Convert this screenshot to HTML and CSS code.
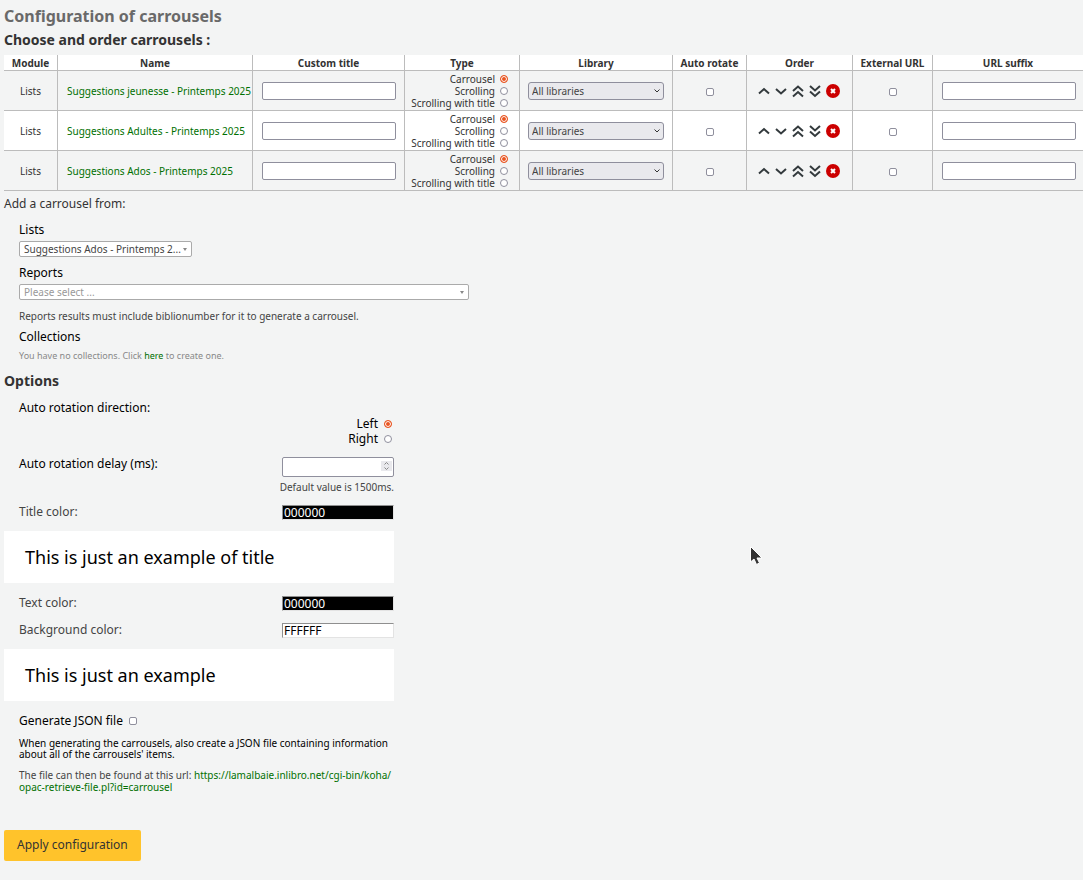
FILE: index.html
```
<!DOCTYPE html>
<html lang="en">
<head>
<meta charset="utf-8">
<title>Configuration of carrousels</title>
<link rel="stylesheet" href="styles.css">
</head>
<body>
<svg class="defs" aria-hidden="true">
  <symbol id="up" viewBox="0 0 14 14"><path d="M2 9.5 7 5l5 4.5"/></symbol>
  <symbol id="down" viewBox="0 0 14 14"><path d="M2 5l5 4.5L12 5"/></symbol>
  <symbol id="top" viewBox="0 0 14 14"><path d="M2 7l5-4.5L12 7M2 12.5 7 8l5 4.5"/></symbol>
  <symbol id="bottom" viewBox="0 0 14 14"><path d="M2 2l5 4.500L12 2M2 7.500l5 4.500 5-4.500"/></symbol>
  <symbol id="remove" viewBox="0 0 14 14"><circle cx="7" cy="7" r="7"/><path d="M5 5l4 4M9 5 5 9"/></symbol>
</svg>
<main>
  <h1>Configuration of carrousels</h1>
  <form>
  <h2>Choose and order carrousels :</h2>
  <table class="carrousels">
    <colgroup><col class="c-module"><col class="c-name"><col class="c-title"><col class="c-type"><col class="c-library"><col class="c-auto"><col class="c-order"><col class="c-external"><col class="c-suffix"></colgroup>
    <thead>
      <tr><th>Module</th><th>Name</th><th>Custom title</th><th>Type</th><th>Library</th><th>Auto rotate</th><th>Order</th><th>External URL</th><th>URL suffix</th></tr>
    </thead>
    <tbody>
      <tr>
        <td class="center">Lists</td>
        <td class="name"><a href="#">Suggestions jeunesse - Printemps 2025</a></td>
        <td><input class="text" type="text" aria-label="Custom title"></td>
        <td><div class="types"><label>Carrousel<input type="radio" name="type1" checked></label><label>Scrolling<input type="radio" name="type1"></label><label>Scrolling with title<input type="radio" name="type1"></label></div></td>
        <td class="lib"><select class="library" aria-label="Library"><option>All libraries</option></select></td>
        <td class="center"><input type="checkbox" aria-label="Auto rotate"></td>
        <td><div class="order"><button type="button" aria-label="Move up"><svg><use href="#up"/></svg></button><button type="button" aria-label="Move down"><svg><use href="#down"/></svg></button><button type="button" aria-label="Move to top"><svg><use href="#top"/></svg></button><button type="button" aria-label="Move to bottom"><svg><use href="#bottom"/></svg></button><button type="button" class="remove" aria-label="Remove"><svg><use href="#remove"/></svg></button></div></td>
        <td class="center"><input type="checkbox" aria-label="External URL"></td>
        <td><input class="text" type="text" aria-label="URL suffix"></td>
      </tr>
      <tr>
        <td class="center">Lists</td>
        <td class="name"><a href="#">Suggestions Adultes - Printemps 2025</a></td>
        <td><input class="text" type="text" aria-label="Custom title"></td>
        <td><div class="types"><label>Carrousel<input type="radio" name="type2" checked></label><label>Scrolling<input type="radio" name="type2"></label><label>Scrolling with title<input type="radio" name="type2"></label></div></td>
        <td class="lib"><select class="library" aria-label="Library"><option>All libraries</option></select></td>
        <td class="center"><input type="checkbox" aria-label="Auto rotate"></td>
        <td><div class="order"><button type="button" aria-label="Move up"><svg><use href="#up"/></svg></button><button type="button" aria-label="Move down"><svg><use href="#down"/></svg></button><button type="button" aria-label="Move to top"><svg><use href="#top"/></svg></button><button type="button" aria-label="Move to bottom"><svg><use href="#bottom"/></svg></button><button type="button" class="remove" aria-label="Remove"><svg><use href="#remove"/></svg></button></div></td>
        <td class="center"><input type="checkbox" aria-label="External URL"></td>
        <td><input class="text" type="text" aria-label="URL suffix"></td>
      </tr>
      <tr>
        <td class="center">Lists</td>
        <td class="name"><a href="#">Suggestions Ados - Printemps 2025</a></td>
        <td><input class="text" type="text" aria-label="Custom title"></td>
        <td><div class="types"><label>Carrousel<input type="radio" name="type3" checked></label><label>Scrolling<input type="radio" name="type3"></label><label>Scrolling with title<input type="radio" name="type3"></label></div></td>
        <td class="lib"><select class="library" aria-label="Library"><option>All libraries</option></select></td>
        <td class="center"><input type="checkbox" aria-label="Auto rotate"></td>
        <td><div class="order"><button type="button" aria-label="Move up"><svg><use href="#up"/></svg></button><button type="button" aria-label="Move down"><svg><use href="#down"/></svg></button><button type="button" aria-label="Move to top"><svg><use href="#top"/></svg></button><button type="button" aria-label="Move to bottom"><svg><use href="#bottom"/></svg></button><button type="button" class="remove" aria-label="Remove"><svg><use href="#remove"/></svg></button></div></td>
        <td class="center"><input type="checkbox" aria-label="External URL"></td>
        <td><input class="text" type="text" aria-label="URL suffix"></td>
      </tr>
    </tbody>
  </table>

  <p class="lead">Add a carrousel from:</p>
  <section class="sources">
    <label for="lists">Lists</label>
    <select id="lists" class="picker picker-short"><option>Suggestions Ados - Printemps 2...</option></select>
    <label for="reports">Reports</label>
    <select id="reports" class="picker empty"><option>Please select ...</option></select>
    <p class="hint">Reports results must include biblionumber for it to generate a carrousel.</p>
    <h3>Collections</h3>
    <p class="muted">You have no collections. Click <a href="#">here</a> to create one.</p>
  </section>

  <h2>Options</h2>
  <section class="options">
    <fieldset>
      <legend>Auto rotation direction:</legend>
      <label>Left<input type="radio" name="direction" checked></label>
      <label>Right<input type="radio" name="direction"></label>
    </fieldset>
    <div class="row delay">
      <label for="delay">Auto rotation delay (ms):</label>
      <div class="field">
        <div class="number"><input id="delay" class="text" type="number"><svg viewBox="0 0 11 10" aria-hidden="true"><path class="pad" d="M0 0h11v10H0z"/><path d="M3.500 3.500l2-2 2 2M3.500 6.500l2 2 2-2"/></svg></div>
        <p class="hint">Default value is 1500ms.</p>
      </div>
    </div>
    <div class="row color">
      <label for="title-color">Title color:</label>
      <input id="title-color" class="swatch dark" type="text" value="000000">
    </div>
    <div class="preview">This is just an example of title</div>
    <div class="row color">
      <label for="text-color">Text color:</label>
      <input id="text-color" class="swatch dark" type="text" value="000000">
    </div>
    <div class="row color">
      <label for="background-color">Background color:</label>
      <input id="background-color" class="swatch" type="text" value="FFFFFF">
    </div>
    <div class="preview">This is just an example</div>
    <div class="json">
      <label>Generate JSON file<input type="checkbox"></label>
      <p class="about">When generating the carrousels, also create a JSON file containing information about all of the carrousels' items.</p>
      <p class="location">The file can then be found at this url: <a href="#">https://lamalbaie.inlibro.net/cgi-bin/koha/<wbr>opac-retrieve-file.pl?id=carrousel</a></p>
    </div>
  </section>
  <button class="apply" type="submit">Apply configuration</button>
  </form>
</main>
<svg class="pointer" viewBox="0 0 14 22" aria-hidden="true"><path d="M1.500 1.500v15.500l3.500-3 2.500 5.500 3-1.500-2.500-5h5z"/></svg>
</body>
</html>
```

FILE: styles.css
```
* { box-sizing: border-box; }
body {
  margin: 0;
  padding: 6px 0 18px 4px;
  background: #f3f4f4;
  color: #333;
  font: 12px/16px "Noto Sans", sans-serif;
  overflow-x: hidden;
}
h1, h2, h3, p { margin: 0; }
h1 { margin-bottom: 4px; color: #696969; font-size: 16px; line-height: 20px; }
h2 { font-size: 14px; line-height: 20px; }
h3 { color: #000; font-size: 12px; font-weight: 400; }
a { color: #007000; text-decoration: none; }
input, select, button { font: inherit; margin: 0; }
.defs { display: none; }

.carrousels {
  width: 100%;
  margin-top: 5px;
  table-layout: fixed;
  border-spacing: 0;
  font-size: 10px;
  line-height: 12px;
}
.c-module { width: 54px; }
.c-name { width: 195px; }
.c-title { width: 152px; }
.c-type { width: 115px; }
.c-library { width: 153px; }
.c-auto { width: 74px; }
.c-order { width: 106px; }
.c-external { width: 80px; }
th, td { border: solid #bcbcbc; border-width: 0 1px 1px 0; }
th:last-child, td:last-child { border-right: 0; }
th { height: 16px; padding: 2px 0 1px; background: #fff; white-space: nowrap; }
td { height: 40px; padding: 0 8px 0 9px; }
td:last-child { padding-right: 7px; }
.center { padding: 0; text-align: center; }
.name { padding-right: 0; white-space: nowrap; }
.lib { padding-left: 8px; }
tbody tr:nth-child(even) { background: #fff; }

.text {
  display: block;
  width: 100%;
  height: 18px;
  padding: 0 2px;
  border: 1px solid #8f8f9d;
  border-radius: 2px;
  background: #fff;
}
.library, .picker {
  appearance: none;
  display: block;
  width: 100%;
  background-repeat: no-repeat;
}
.library {
  height: 18px;
  padding: 0 3px;
  border: 1px solid #8f8f9d;
  border-radius: 3px;
  color: #444;
  background-color: #e9e9ed;
  background-image: url("data:image/svg+xml,%3Csvg xmlns='http://www.w3.org/2000/svg' width='6' height='4'%3E%3Cpath d='M.5 .5 3 3 5.500 .5' fill='none' stroke='%23333'/%3E%3C/svg%3E");
  background-position: right 3px center;
}
input[type="radio"], input[type="checkbox"] {
  appearance: none;
  flex: none;
  width: 8px;
  height: 8px;
  border: 1px solid #8f8f9d;
  background: #fff;
  vertical-align: middle;
}
input[type="checkbox"] { border-radius: 2px; }
input[type="radio"] { border-radius: 50%; }
input[type="radio"]:checked {
  border-color: #e95420;
  background: #e95420;
  box-shadow: inset 0 0 0 1px #fff;
}
.types { display: flex; flex-direction: column; padding-right: 3px; white-space: nowrap; }
.types label { display: flex; justify-content: flex-end; align-items: center; gap: 5px; }
.order { display: flex; justify-content: center; gap: 3px; padding-right: 4px; }
.order button { display: flex; padding: 0; border: 0; background: none; }
.order svg { width: 14px; height: 14px; fill: none; stroke: #333a3d; stroke-width: 2; }
.order .remove { margin-left: 1px; }
.order .remove svg { fill: #c00; stroke: none; }
#remove path { stroke: #fff; stroke-width: 2; }

.lead { margin-top: 5px; }
.sources { display: flex; flex-direction: column; width: 465px; max-width: 100%; margin: 10px 0 9px; padding-left: 15px; }
.sources label { color: #000; }
.picker {
  height: 16px;
  margin: 3px 0 8px;
  padding: 0 4px;
  border: 1px solid #aaa;
  border-radius: 2px;
  background-color: #fff;
  background-image: url("data:image/svg+xml,%3Csvg xmlns='http://www.w3.org/2000/svg' width='4' height='3'%3E%3Cpath d='M0 0h4L2 3z' fill='%23888'/%3E%3C/svg%3E");
  background-position: right 4px center;
  color: #444;
  font-size: 10px;
  line-height: 14px;
}
.picker-short { width: 173px; }
.picker.empty { color: #999; margin-bottom: 10px; }
.hint { color: #444; font-size: 10px; line-height: 12px; }
.sources .hint { margin-bottom: 7px; }
.muted { margin-top: 5px; color: #888; font-size: 9px; line-height: 12px; }

.options { width: 390px; max-width: 100%; margin-top: 9px; }
.options label, legend { color: #000; }
fieldset { margin: 0; padding: 0; border: 0; padding-right: 2px; }
legend { padding: 0 0 0 15px; }
fieldset label { display: flex; justify-content: flex-end; align-items: center; gap: 6px; line-height: 15px; }
.row { display: flex; justify-content: space-between; padding-left: 15px; }
.delay { margin-top: 10px; }
.field { display: flex; flex-direction: column; align-items: flex-end; padding-top: 1px; }
.field .hint { margin-top: 4px; white-space: nowrap; }
.number { position: relative; width: 112px; }
.number .text { height: 20px; appearance: textfield; }
.number svg { position: absolute; top: 4px; right: 2px; width: 11px; height: 10px; fill: none; stroke: #888; }
.number .pad { fill: #e9e9ed; stroke: none; }
.color { margin-top: 11px; align-items: center; }
.options .color label { color: #444; }
.swatch {
  width: 112px;
  height: 15px;
  padding: 0 1px;
  border: 1px solid;
  border-color: #8f8f8f #e3e3e3 #e3e3e3 #8f8f8f;
  background: #fff;
  color: #000;
  line-height: 13px;
}
.swatch.dark { background: #000; color: #fff; }
.preview { margin: 11px 0 12px; padding: 14px 21px; background: #fff; color: #000; font-size: 18px; line-height: 24px; }
.json { padding-left: 15px; }
.json label { display: flex; align-items: center; gap: 6px; }
.about, .location { margin-top: 9px; font-size: 10px; line-height: 12px; }
.about { color: #000; line-height: 11px; }
.location { color: #444; }
.apply {
  margin-top: 37px;
  padding: 7px 13px 8px;
  border: 0;
  border-radius: 2px;
  background: #ffc32b;
  color: #333;
}
.pointer {
  position: absolute;
  left: 749px;
  top: 545px;
  width: 14px;
  height: 22px;
  fill: #333;
  stroke: #fff;
}
```
